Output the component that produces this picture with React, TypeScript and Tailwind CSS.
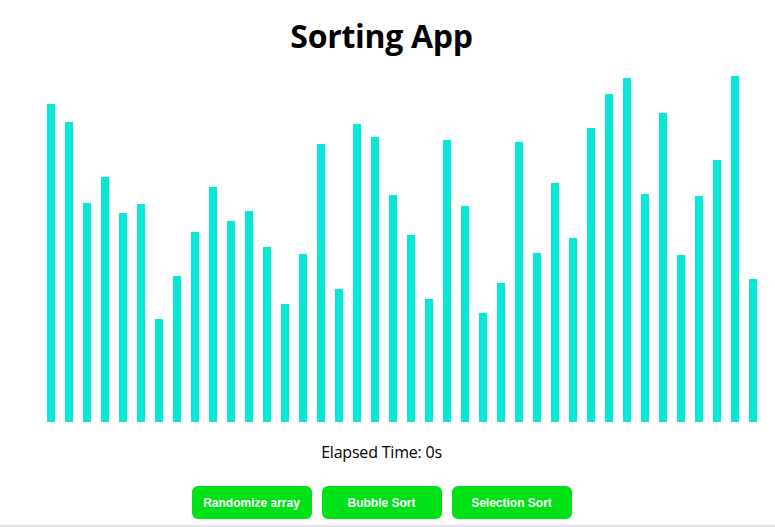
const heights = [
  318, 300, 219, 245, 209, 218, 103, 146, 190, 235, 201, 211, 175, 118, 168,
  278, 133, 298, 285, 227, 187, 123, 282, 216, 109, 139, 280, 169, 239, 184,
  294, 328, 344, 228, 309, 167, 226, 262, 346, 143,
];

function App() {
  return (
    <div className="h-[527px] flex flex-col bg-white overflow-hidden">
      <div className="w-[763px] flex flex-col items-center font-['Open_Sans',sans-serif] text-black">
        {/* title */}
        <h1 className="mt-[16px] text-[32px] leading-[40px] font-bold tracking-[-0.3px]">
          Sorting App
        </h1>

        {/* bars */}
        <div className="self-stretch h-[366px] pl-[47px] flex items-end gap-[10px]">
          {heights.map((h, i) => (
            <div
              key={i}
              className="w-[8px] bg-[#07e8d6]"
              style={{ height: h }}
            />
          ))}
        </div>

        <p className="mt-[18px] text-[16px] leading-[24px] tracking-[-0.2px]">
          Elapsed Time: 0s
        </p>

        {/* buttons */}
        <div className="mt-[22px] flex gap-[10px] font-['Liberation_Sans',Arial,sans-serif]">
          <button className="w-[120px] h-[33px] rounded-[6px] bg-[#00e118] text-white text-[12px] font-bold">
            Randomize array
          </button>
          <button className="w-[120px] h-[33px] rounded-[6px] bg-[#00e118] text-white text-[12px] font-bold">
            Bubble Sort
          </button>
          <button className="w-[120px] h-[33px] rounded-[6px] bg-[#00e118] text-white text-[12px] font-bold">
            Selection Sort
          </button>
        </div>
      </div>
      <div className="mt-auto h-[2px] bg-[#e1e1e6]" />
    </div>
  );
}

export default App;
